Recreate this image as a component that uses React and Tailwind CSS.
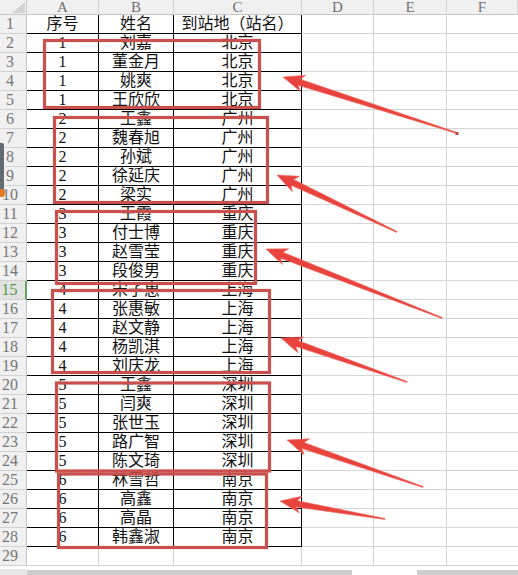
import React from 'react';

const cols = ['A', 'B', 'C', 'D', 'E', 'F'];

const data = [
  ['序号', '姓名', '到站地（站名）'],
  ['1', '刘嘉', '北京'],
  ['1', '董金月', '北京'],
  ['1', '姚爽', '北京'],
  ['1', '王欣欣', '北京'],
  ['2', '王鑫', '广州'],
  ['2', '魏春旭', '广州'],
  ['2', '孙斌', '广州'],
  ['2', '徐延庆', '广州'],
  ['2', '梁实', '广州'],
  ['3', '王霞', '重庆'],
  ['3', '付士博', '重庆'],
  ['3', '赵雪莹', '重庆'],
  ['3', '段俊男', '重庆'],
  ['4', '宋子惠', '上海'],
  ['4', '张惠敏', '上海'],
  ['4', '赵文静', '上海'],
  ['4', '杨凯淇', '上海'],
  ['4', '刘庆龙', '上海'],
  ['5', '王鑫', '深圳'],
  ['5', '闫爽', '深圳'],
  ['5', '张世玉', '深圳'],
  ['5', '路广智', '深圳'],
  ['5', '陈文琦', '深圳'],
  ['6', '林雪哲', '南京'],
  ['6', '高鑫', '南京'],
  ['6', '高晶', '南京'],
  ['6', '韩鑫淑', '南京'],
  ['', '', ''],
];

// red annotation boxes [x, y, w, h]
const boxes = [
  [44.5, 40.5, 215, 67],
  [54.5, 117.5, 213, 85],
  [56.5, 211.5, 199, 72],
  [52.5, 290.5, 217, 82],
  [56.5, 383, 213, 88],
  [58.5, 474, 208, 73.5],
];

// arrows: tip -> tail
const arrows = [
  [283, 77, 457, 133],
  [277, 175, 397, 232],
  [266, 249, 442, 318],
  [281, 338, 407, 382],
  [287, 440, 423, 487],
  [280, 501, 385, 519],
];

function arrowPoints([tx, ty, ex, ey]) {
  const dx = ex - tx;
  const dy = ey - ty;
  const len = Math.hypot(dx, dy);
  const ux = dx / len;
  const uy = dy / len;
  const nx = -uy;
  const ny = ux;
  const p = (a, b) => `${(tx + ux * a + nx * b).toFixed(1)},${(ty + uy * a + ny * b).toFixed(1)}`;
  return [p(0, 0), p(21, 8.5), p(17, 3.2), p(len, 0.5), p(len, -0.5), p(17, -3.2), p(21, -8.5)].join(' ');
}

const grid = 'grid grid-cols-[27px_72px_75px_128px_72px_73px_71px]';
const cellFont = "font-['Liberation_Serif','Noto_Sans_CJK_SC',serif]";

function App() {
  return (
    <div className="relative w-[518px] h-[575px] overflow-hidden bg-white">
      {/* column headers */}
      <div className={`${grid} h-[15px] bg-[#f0f0f0] border-b border-[#c6c6c6]`}>
        <div className="relative border-r border-[#c6c6c6]">
          <svg className="absolute left-[12px] top-[2px]" width="13" height="11">
            <polygon points="13,0 13,11 0,11" fill="#d3d3d3" />
          </svg>
        </div>
        {cols.map((c) => (
          <div
            key={c}
            className="flex items-center justify-center border-r border-[#d6d6d6] font-['Liberation_Serif',serif] text-[15px] leading-none text-[#707070]"
          >
            {c}
          </div>
        ))}
      </div>

      {data.map((row, i) => {
        const n = i + 1;
        const inTable = n <= 28;
        const sel = n === 15;
        const line = inTable ? 'border-black' : 'border-[#d4d4d4]';
        return (
          <div key={n} className={`${grid} h-[19px]`}>
            <div
              className={`flex items-center justify-center pr-[6px] border-b border-[#d2d2d2] font-['Liberation_Serif',serif] text-[16px] leading-none ${
                sel ? 'bg-[#e2e2e2] text-[#4f9a4f] border-r-2 border-r-[#62a862]' : 'bg-[#f0f0f0] text-[#767676] border-r border-r-[#c6c6c6]'
              }`}
            >
              {n}
            </div>
            {row.map((v, j) => (
              <div
                key={j}
                className={`flex items-center justify-center overflow-visible whitespace-nowrap border-r border-b ${line} ${cellFont} text-[16px] leading-none text-[#111]`}
              >
                {v}
              </div>
            ))}
            <div className="border-r border-b border-[#d4d4d4]" />
            <div className="border-r border-b border-[#d4d4d4]" />
            <div className="border-b border-[#d4d4d4]" />
          </div>
        );
      })}

      {/* bottom scroll strip */}
      <div className="flex h-[9px] items-end">
        <div className="w-[27px] h-[6px] bg-[#e6e6e6]" />
        <div className="w-[325px] h-[5px] bg-[#cdcdcd]" />
        <div className="w-[65px] h-[5px] bg-white" />
        <div className="flex-1 h-[5px] bg-[#cdcdcd]" />
      </div>

      {/* cursor fragment at the left edge */}
      <div className="absolute left-0 top-[143px] w-[4px] h-[50px] rounded-r-[2px] bg-[#646a73]" />
      <div className="absolute left-[-2px] top-[189px] w-[7px] h-[8px] rounded-full bg-[#e37a22]" />

      {/* annotations */}
      <svg className="absolute left-0 top-0 pointer-events-none" width="518" height="575">
        {boxes.map(([x, y, w, h], i) => (
          <rect key={i} x={x} y={y} width={w} height={h} fill="none" stroke="#c9504d" strokeWidth="3.2" />
        ))}
        {arrows.map((a, i) => (
          <polygon key={i} points={arrowPoints(a)} fill="#e8443d" stroke="#ee6a62" strokeWidth="0.6" strokeLinejoin="round" />
        ))}
        <rect x="455.5" y="132" width="3" height="3" fill="#c9403a" />
      </svg>
    </div>
  );
}

export default App;
